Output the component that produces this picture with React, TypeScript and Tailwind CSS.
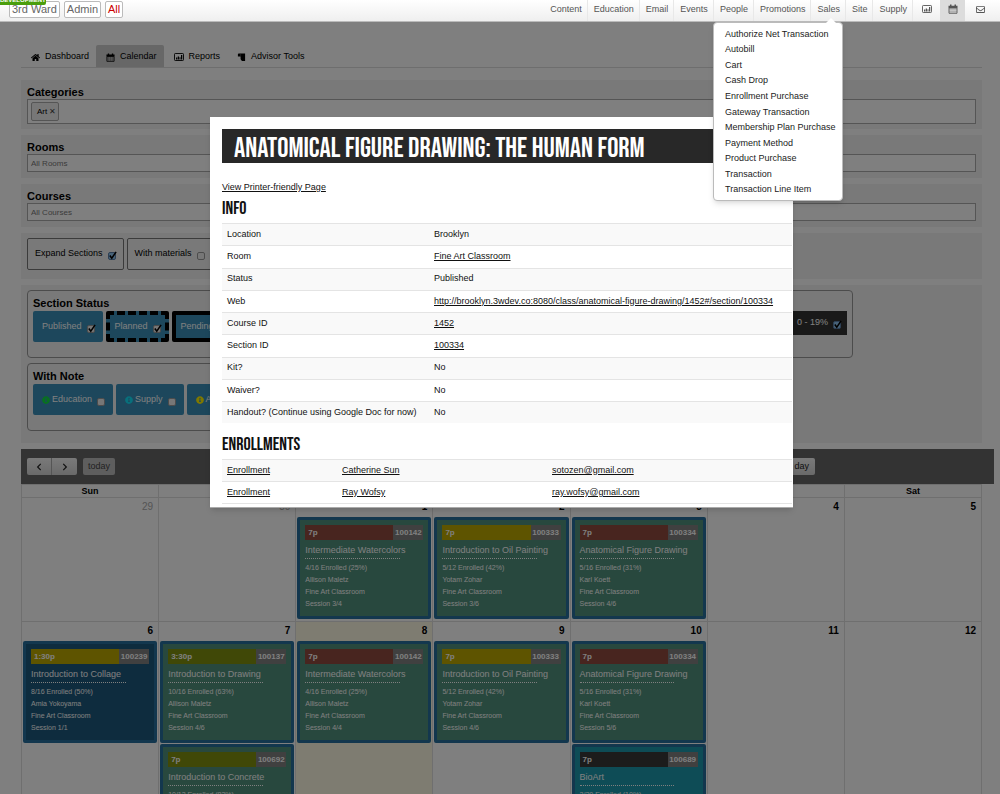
import React from "react";
import { FaHome, FaRegEnvelope, FaInfoCircle, FaChevronLeft, FaChevronRight } from "react-icons/fa";

const display = "font-['Bebas_Neue','Oswald','Liberation_Sans_Narrow','Roboto_Condensed',sans-serif]";

function ChartIcon({ className = "size-[10px]" }: { className?: string }) {
  return (
    <svg viewBox="0 0 20 20" className={className} aria-hidden="true">
      <rect x="1" y="3" width="18" height="14" rx="1.5" fill="none" stroke="currentColor" strokeWidth="1.8" />
      <path d="M4 15v-4h2.5v4zM7.5 15V9H10v6zM11 15v-4.500h2V15zM14 15V6h2.500v9z" fill="currentColor" />
    </svg>
  );
}

function CalendarIcon({ className = "size-[10px]" }: { className?: string }) {
  return (
    <svg viewBox="0 0 20 20" className={className} aria-hidden="true">
      <path d="M1 3.500h3V1h3v2.500h6V1h3v2.500h3V8H1z" fill="currentColor" />
      <path d="M2 8h16v10.500H2z" fill="none" stroke="currentColor" strokeWidth="1.8" />
      <path d="M6 8v10M10 8v10M14 8v10M2 11.500h16M2 15h16" stroke="currentColor" strokeWidth=".8" opacity=".6" />
    </svg>
  );
}

function ToolsIcon() {
  return (
    <svg viewBox="0 0 20 20" className="size-[9px]" aria-hidden="true">
      <path d="M2 3Q2 1 4 1h14v17h-7l-3-4V8H2z" fill="currentColor" />
      <path d="M8 2v6" stroke="#777" strokeWidth="1" />
    </svg>
  );
}

function Check({ id, checked = false, blue = false }: { id: string; checked?: boolean; blue?: boolean }) {
  return (
    <span className="relative mt-1 inline-block size-2">
      <input
        id={id}
        type="checkbox"
        defaultChecked={checked}
        className={`block size-2 appearance-none rounded-xs border ${blue ? "border-[#5a7fa8] bg-[#8fc4f0]" : "border-[#999] bg-[#eee]"}`}
      />
      {checked && (
        <svg viewBox="0 0 10 10" className="pointer-events-none absolute -top-px left-0 size-[9px]">
          <path d="M2 5 4.200 8 9 1" fill="none" stroke="#000" strokeWidth="1.700" />
        </svg>
      )}
    </span>
  );
}

const nav = ["Content", "Education", "Email", "Events", "People", "Promotions", "Sales", "Site", "Supply"];
const sales = [
  "Authorize Net Transaction", "Autobill", "Cart", "Cash Drop", "Enrollment Purchase", "Gateway Transaction",
  "Membership Plan Purchase", "Payment Method", "Product Purchase", "Transaction", "Transaction Line Item",
];

function TopBar() {
  const crumb = "rounded-xs border border-[#bbb] bg-white px-[2px]";
  const icon = "flex items-center justify-center pb-[3px]";
  return (
    <header className="relative z-30 flex h-[22px] items-stretch justify-between border-b border-[#bbb] bg-linear-to-b from-white to-[#efefef] pr-[5px]">
      <div className="flex items-start gap-1 pl-[9px] pt-px text-[11px] leading-[15px] text-[#666]">
        <a href="#" className={crumb}>3rd Ward</a>
        <a href="#" className={crumb}>Admin</a>
        <a href="#" className={`${crumb} text-[#c00]`}>All</a>
      </div>
      <span className="absolute left-0 -top-1 rounded-br-xs bg-[#4a9e0c] text-[6px] font-bold leading-[9px] text-white">DEVELOPMENT</span>
      <nav className="flex items-stretch text-[9px] text-[#555]">
        {nav.map((n) => (
          <a key={n} href="#" className="flex items-center border-r border-[#e8e8e8] pb-[2px] pl-[6px] pr-[5px]">{n}</a>
        ))}
        <a href="#" aria-label="Reports" className={`${icon} w-[27px]`}><ChartIcon /></a>
        <a href="#" aria-label="Calendar" className={`${icon} w-[25px] bg-[#dcdcdc]`}><CalendarIcon /></a>
        <a href="#" aria-label="Mail" className={`${icon} w-[30px]`}><FaRegEnvelope size={9} /></a>
      </nav>
      <div className="absolute right-[157px] top-[22px] flex h-[179px] w-[130px] flex-col rounded-sm border border-[#bbb] bg-white py-[3px] shadow-md">
        <svg viewBox="0 0 10 5" className="absolute right-[6px] -top-[5px] h-[5px] w-[10px]"><path d="M0 5 5 0l5 5z" fill="#fff" /></svg>
        {sales.map((s) => (
          <a key={s} href="#" className="flex flex-1 items-center pl-[11px] text-[9px] leading-3 text-[#222]">{s}</a>
        ))}
      </div>
    </header>
  );
}

function Tabs() {
  const tab = "flex h-[22px] items-center gap-[5px] rounded-t-xs pl-[10px] pr-[7px] pt-[2px]";
  return (
    <nav className="mr-3 mt-[23px] flex border-b border-[#ddd] text-[9px] text-black">
      <a href="#" className={tab}><FaHome size={9} />Dashboard</a>
      <a href="#" className={`${tab} bg-[#cecece]`}><CalendarIcon className="size-[9px]" />Calendar</a>
      <a href="#" className={tab}><ChartIcon />Reports</a>
      <a href="#" className={tab}><ToolsIcon />Advisor Tools</a>
    </nav>
  );
}

const panel = "mr-3 bg-[#f3f3f3] px-[6px]";

function Filter({ id, label, placeholder }: { id: string; label: string; placeholder: string }) {
  return (
    <div className={`${panel} mt-[6px] h-[43px] pt-[5px]`}>
      <label htmlFor={id} className="block text-[11px] font-bold leading-[14px]">{label}</label>
      <input id={id} placeholder={placeholder} className="block h-[18px] w-full border border-[#aaa] bg-white px-[3px] text-[8px] placeholder:text-[#777]" />
    </div>
  );
}

function Pill({ id, children, checked = false, className = "" }: { id: string; children: React.ReactNode; checked?: boolean; className?: string }) {
  return (
    <label htmlFor={id} className={`flex h-[31px] items-center gap-[5px] rounded-xs border-4 bg-[#3a8fb8] pl-[5px] pr-1 text-[9px] text-white ${className}`}>
      <span className="flex items-center gap-[2px] whitespace-nowrap">{children}</span>
      <Check id={id} checked={checked} />
    </label>
  );
}

function Filters() {
  const box = "h-[68px] max-w-full rounded-sm border border-[#999] px-[5px]";
  const heading = "pt-[5px] text-[11px] font-bold leading-[15px]";
  const toggle = "flex h-8 items-center gap-[5px] rounded-xs border border-[#777] px-[7px]";
  return (
    <>
      <div className={`${panel} mt-3 h-[49px] pt-[5px]`}>
        <label htmlFor="categories" className="block text-[11px] font-bold leading-[14px]">Categories</label>
        <div className="flex h-[25px] items-center gap-1 border border-[#aaa] bg-white px-[3px]">
          <span className="flex h-[19px] items-center gap-[2px] rounded-xs border border-[#aaa] bg-[#eee] pl-[5px] pr-[2px] text-[8px]">
            Art <button aria-label="Remove Art" className="text-[8px] leading-none text-[#444]">✕</button>
          </span>
          <input id="categories" className="min-w-0 flex-1 bg-transparent text-[9px]" />
        </div>
      </div>
      <Filter id="rooms" label="Rooms" placeholder="All Rooms" />
      <Filter id="courses" label="Courses" placeholder="All Courses" />
      <div className={`${panel} mt-[6px] flex h-[46px] items-start gap-[3px] pt-[5px] text-[9px]`}>
        <label htmlFor="expand" className={toggle}>Expand Sections <Check id="expand" checked blue /></label>
        <label htmlFor="materials" className={toggle}>With materials <Check id="materials" /></label>
      </div>
      <div className={`${panel} mt-[6px] flex h-[158px] flex-col items-start gap-[5px] pt-[5px]`}>
        <fieldset className={`${box} w-[826px]`}>
          <div className={heading}>Section Status</div>
          <div className="flex items-start gap-[3px]">
            <Pill id="published" checked className="border-[#3a8fb8]">Published</Pill>
            <Pill id="planned" checked className="border-dashed border-black">Planned</Pill>
            <Pill id="pending" checked className="border-black">Pending</Pill>
            <label htmlFor="low" className="ml-auto flex h-6 items-center gap-[5px] bg-[#333] pl-[10px] pr-[6px] text-[9px] text-white">0 - 19% <Check id="low" checked blue /></label>
          </div>
        </fieldset>
        <fieldset className={`${box} w-[500px]`}>
          <div className={heading}>With Note</div>
          <div className="flex items-start gap-[3px]">
            <Pill id="n-edu" className="border-[#3a8fb8]"><FaInfoCircle size={8} color="#10e040" />Education</Pill>
            <Pill id="n-sup" className="border-[#3a8fb8]"><FaInfoCircle size={8} color="#10e0f8" />Supply</Pill>
            <Pill id="n-adm" className="border-[#3a8fb8]"><FaInfoCircle size={8} color="#fff000" />Admin</Pill>
          </div>
        </fieldset>
      </div>
    </>
  );
}

type Ev = { time: string; id: string; title: string; lines: string[]; bar: string; body: string };
const red = "bg-[#904a3e]", yellow = "bg-[#bda800]", olive = "bg-[#80900f]", dark = "bg-[#383838]";
const green = "bg-[#50907c]", navy = "bg-[#1c587c]", teal = "bg-[#1c98ac]";
const room = "Fine Art Classroom";
const water = (s: string): Ev => ({ time: "7p", id: "100142", title: "Intermediate Watercolors", lines: ["4/16 Enrolled (25%)", "Allison Maletz", room, s], bar: red, body: green });
const oil = (s: string): Ev => ({ time: "7p", id: "100333", title: "Introduction to Oil Painting", lines: ["5/12 Enrolled (42%)", "Yotam Zohar", room, s], bar: yellow, body: green });
const figure = (s: string): Ev => ({ time: "7p", id: "100334", title: "Anatomical Figure Drawing", lines: ["5/16 Enrolled (31%)", "Karl Koett", room, s], bar: red, body: green });

const weeks: { day: number; muted?: boolean; today?: boolean; events?: Ev[] }[][] = [
  [
    { day: 29, muted: true }, { day: 30, muted: true },
    { day: 1, events: [water("Session 3/4")] },
    { day: 2, events: [oil("Session 3/6")] },
    { day: 3, events: [figure("Session 4/6")] },
    { day: 4 }, { day: 5 },
  ],
  [
    { day: 6, events: [{ time: "1:30p", id: "100239", title: "Introduction to Collage", lines: ["8/16 Enrolled (50%)", "Amia Yokoyama", room, "Session 1/1"], bar: yellow, body: navy }] },
    { day: 7, events: [
      { time: "3:30p", id: "100137", title: "Introduction to Drawing", lines: ["10/16 Enrolled (63%)", "Allison Maletz", room, "Session 4/6"], bar: olive, body: green },
      { time: "7p", id: "100692", title: "Introduction to Concrete", lines: ["10/12 Enrolled (83%)"], bar: olive, body: green },
    ] },
    { day: 8, today: true, events: [water("Session 4/4")] },
    { day: 9, events: [oil("Session 4/6")] },
    { day: 10, events: [
      figure("Session 5/6"),
      { time: "7p", id: "100689", title: "BioArt", lines: ["2/20 Enrolled (10%)"], bar: dark, body: teal },
    ] },
    { day: 11 }, { day: 12 },
  ],
];

function EventCard({ e }: { e: Ev }) {
  return (
    <article className={`mb-px h-[102px] rounded-xs border-3 border-[#266f9c] px-[5px] pt-[5px] text-white ${e.body}`}>
      <div className="flex h-[15px] text-[8px] font-bold leading-[15px]">
        <span className={`flex-1 pl-[3px] ${e.bar}`}>{e.time}</span>
        <span className="w-[30px] bg-[#808080] text-center">{e.id}</span>
      </div>
      <h4 className="mt-1 w-4/5 whitespace-nowrap border-b border-dotted border-white pb-[2px] text-[9px] leading-3">{e.title}</h4>
      <div className="mt-[3px] text-[7px] leading-3">
        {e.lines.map((l) => <p key={l}>{l}</p>)}
      </div>
    </article>
  );
}

function Calendar() {
  const btn = "h-[17px] bg-linear-to-b from-[#f4f4f4] to-[#d4d4d4] text-[9px] text-[#222]";
  return (
    <section className="mt-[6px]">
      <div className="flex h-[35px] items-center justify-between bg-[#666] pl-[6px]">
        <div className="flex items-center">
          <button aria-label="Previous" className={`${btn} flex w-[25px] items-center justify-center rounded-l-xs border-r border-[#aaa]`}><FaChevronLeft size={8} /></button>
          <button aria-label="Next" className={`${btn} mr-[6px] flex w-[25px] items-center justify-center rounded-r-xs`}><FaChevronRight size={8} /></button>
          <button className="h-[17px] w-8 rounded-xs bg-[#bcbcbc] text-[9px] text-[#444]">today</button>
        </div>
        <div className="mr-[179px] flex">
          <button className={`${btn} rounded-l-xs px-[6px]`}>month</button>
          <button className={`${btn} px-[6px]`}>week</button>
          <button className={`${btn} rounded-r-xs px-[6px]`}>day</button>
        </div>
      </div>
      <div className="mr-3">
        <table className="w-full table-fixed border-collapse border border-[#dedede]">
          <thead>
            <tr className="h-[13px] text-[9px] leading-3">
              {["Sun", "Mon", "Tue", "Wed", "Thu", "Fri", "Sat"].map((d) => <th key={d} className="border border-[#dedede] p-0">{d}</th>)}
            </tr>
          </thead>
          <tbody>
            {weeks.map((w, i) => (
              <tr key={i} className="h-[124px]">
                {w.map((c) => (
                  <td key={c.day} className={`border border-[#dedede] px-px py-0 align-top ${c.today ? "bg-[#fcf8e3]" : ""}`}>
                    <div className={`h-[19px] pr-1 text-right text-[10px] leading-[18px] ${c.muted ? "text-[#aaa]" : "font-bold"}`}>{c.day}</div>
                    {c.events?.map((e) => <EventCard key={e.id} e={e} />)}
                  </td>
                ))}
              </tr>
            ))}
          </tbody>
        </table>
      </div>
    </section>
  );
}

const info: [string, string, boolean][] = [
  ["Location", "Brooklyn", false],
  ["Room", "Fine Art Classroom", true],
  ["Status", "Published", false],
  ["Web", "http://brooklyn.3wdev.co:8080/class/anatomical-figure-drawing/1452#/section/100334", true],
  ["Course ID", "1452", true],
  ["Section ID", "100334", true],
  ["Kit?", "No", false],
  ["Waiver?", "No", false],
  ["Handout? (Continue using Google Doc for now)", "No", false],
];

function Dialog() {
  const row = "border-t border-[#e4e4e4] odd:bg-[#f9f9f9]";
  return (
    <div role="dialog" aria-modal="true" aria-labelledby="dialog-title" className="absolute left-[21%] top-[117px] z-20 h-[391px] w-[583px] overflow-hidden border-b border-[#aaa] bg-white pl-3 pr-px pt-3 text-[9px] text-[#111] shadow-md">
      <h2 id="dialog-title" className={`h-[34px] bg-[#282828] pl-3 text-[28px] font-normal leading-[39px] text-white ${display}`}>ANATOMICAL FIGURE DRAWING: THE HUMAN FORM</h2>
      <a href="#" className="mt-[18px] block leading-3 underline">View Printer-friendly Page</a>
      <h3 className={`mt-1 h-[26px] text-[18px] leading-[24px] ${display}`}>INFO</h3>
      <table className="h-[200px] w-full border-collapse">
        <tbody>
          {info.map(([k, v, link]) => (
            <tr key={k} className={row}>
              <th scope="row" className="w-[207px] whitespace-nowrap py-0 pl-[5px] text-left font-normal">{k}</th>
              <td className="py-0 pl-[5px]">{link ? <a href="#" className="underline">{v}</a> : v}</td>
            </tr>
          ))}
        </tbody>
      </table>
      <h3 className={`mt-[9px] h-[27px] text-[18px] leading-[26px] ${display}`}>ENROLLMENTS</h3>
      <table className="w-full border-collapse border-b border-[#e4e4e4]">
        <tbody>
          {[["Catherine Sun", "sotozen@gmail.com"], ["Ray Wofsy", "ray.wofsy@gmail.com"]].map(([n, m]) => (
            <tr key={n} className={`h-[22px] ${row}`}>
              <td className="w-[115px] pl-[5px]"><a href="#" className="underline">Enrollment</a></td>
              <td className="w-[210px] pl-[5px]"><a href="#" className="underline">{n}</a></td>
              <td className="pl-[5px]"><a href="#" className="underline">{m}</a></td>
            </tr>
          ))}
        </tbody>
      </table>
    </div>
  );
}

export default function App() {
  return (
    <div className="relative h-screen overflow-hidden bg-white font-['Liberation_Sans',Arial,sans-serif] text-black">
      <TopBar />
      <main className="pl-[21px] pr-[6px]">
        <Tabs />
        <Filters />
        <Calendar />
      </main>
      <div className="absolute inset-0 z-10 bg-black/50" />
      <Dialog />
    </div>
  );
}
